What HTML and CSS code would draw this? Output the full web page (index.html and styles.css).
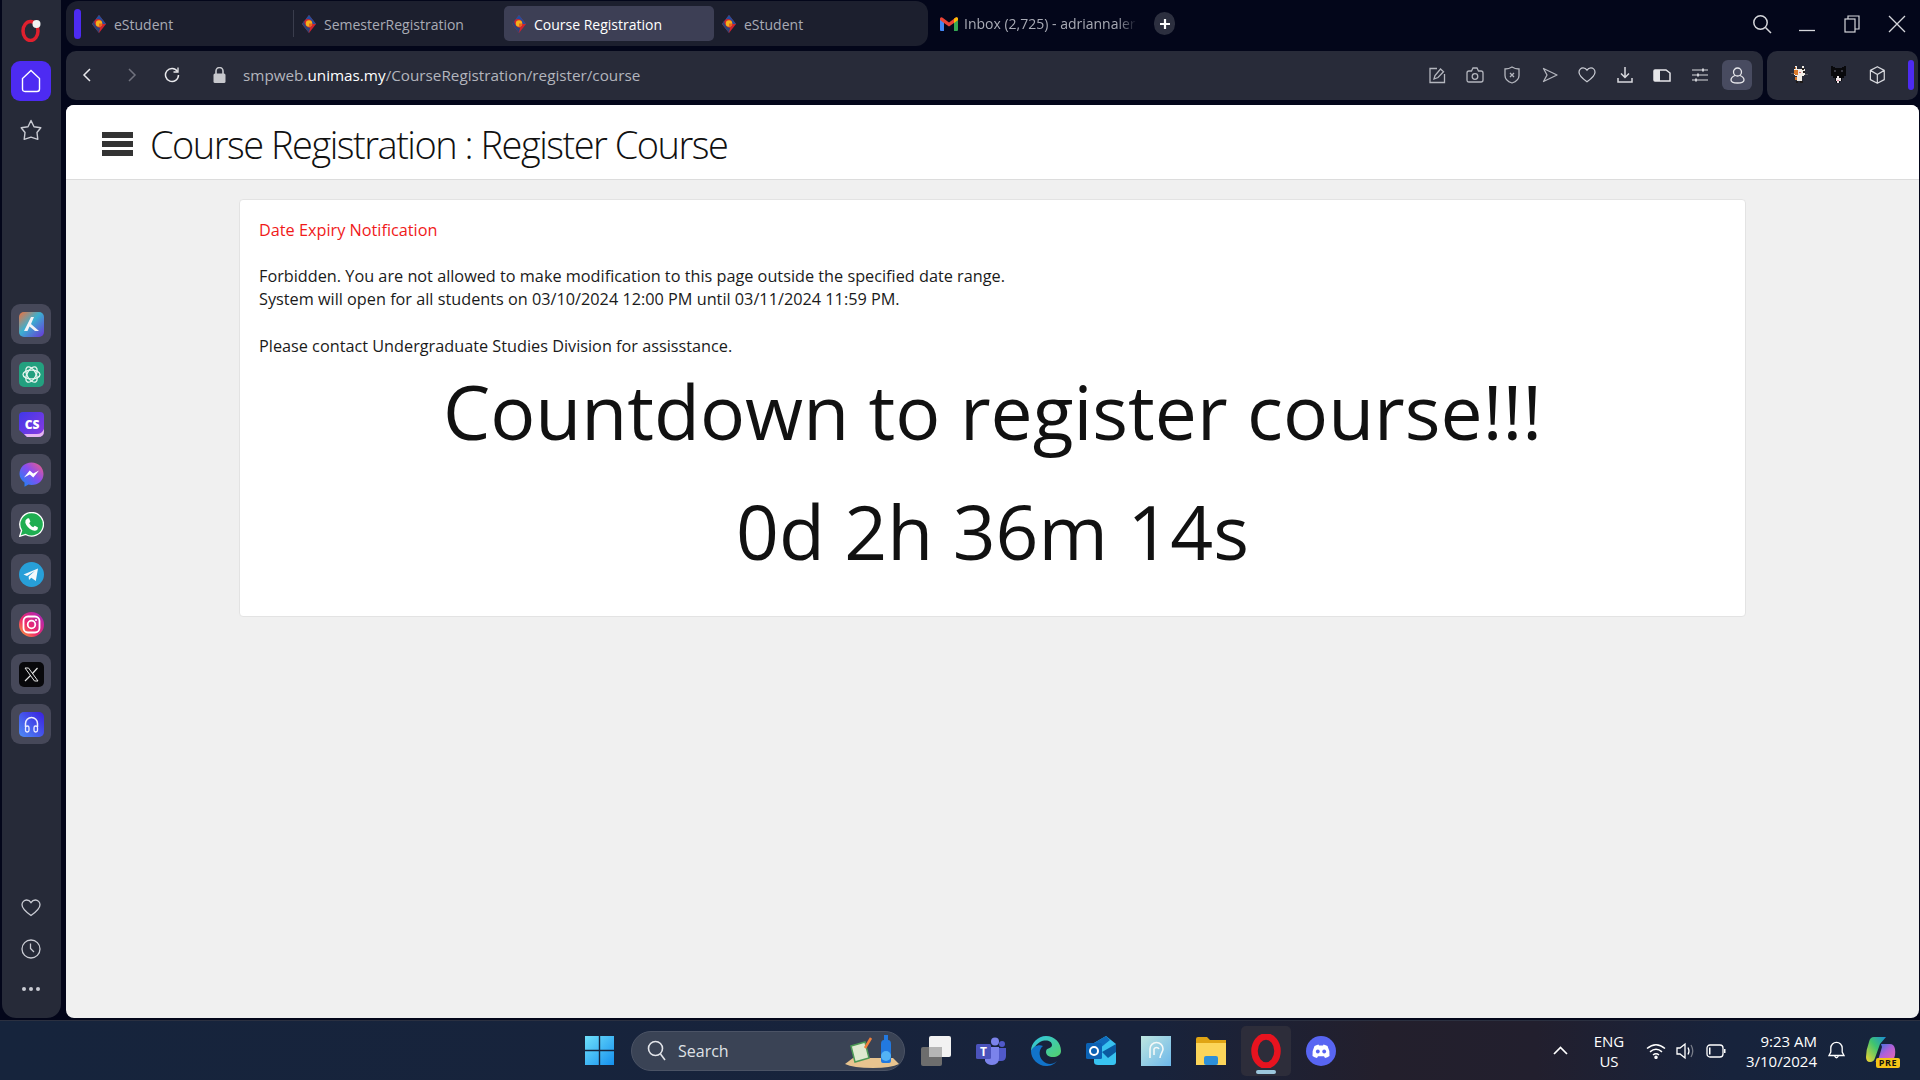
FILE: index.html
```html
<!DOCTYPE html>
<html>
<head>
    <title>Course Registration</title>
    <link rel="stylesheet" href="styles.css">
</head>
<body>
    <svg class="defs" width="0" height="0">
        <defs>
            <symbol id="fav" viewBox="0 0 14 18">
                <path d="M7 0 L14 9 L7 18 L0 9 Z" fill="#cc2430"/>
                <path d="M7 0 L14 9 H10.500 Q10 4 6 4 Q3 4 2 6 L0 9 Z" fill="#1f4f9e"/>
                <path d="M0 9 L2 6 Q3 12 8 13 L7 18 Z" fill="#2a4478"/>
                <circle cx="7" cy="8.500" r="3.200" fill="#f2b21b"/>
                <path d="M7 11.700 A3.200 3.200 0 0 0 10.200 8.500 H7 Z" fill="#e8651e"/>
            </symbol>
        </defs>
    </svg>

    <div class="shell">
        <!-- Sidebar -->
        <div class="sidebar">
            <div class="opera-logo">
                <svg width="24" height="24" viewBox="0 0 24 24"><ellipse cx="11.500" cy="13" rx="7.500" ry="9.500" fill="none" stroke="#e0202e" stroke-width="3.500"/><circle cx="17.500" cy="6" r="4" fill="#f2f2f2"/></svg>
            </div>
            <div class="home-tile">
                <svg width="20" height="24" viewBox="0 0 20 24" fill="none" stroke="#fff" stroke-width="1.400"><path d="M10 1.500 L18.500 9.500 V20 Q18.500 22.500 16 22.500 H4 Q1.500 22.500 1.500 20 V9.500 Z"/></svg>
            </div>
            <div class="side-star">
                <svg width="22" height="22" viewBox="0 0 22 22" fill="none" stroke="#c9cbd3" stroke-width="1.400" stroke-linejoin="round"><path d="M11 1.500 L14 7.800 L20.800 8.700 L17 13.500 L17.800 20.400 L11 18.200 L4.200 20.400 L5 13.500 L1.200 8.700 L8 7.800 Z"/></svg>
            </div>

            <div class="side-apps">
                <div class="app-tile"><svg width="25" height="25" viewBox="0 0 25 25"><defs><linearGradient id="ar" x1="0" y1="0" x2="1" y2="1"><stop offset="0" stop-color="#f0713c"/><stop offset=".45" stop-color="#3bb0d0"/><stop offset="1" stop-color="#6a35d8"/></linearGradient></defs><rect width="25" height="25" rx="5" fill="url(#ar)"/><path d="M5 19 L12 5 L15 5 L12 12 L20 19 L16 19 L10.500 14.500 L8.500 19 Z" fill="#f3f3f6"/></svg></div>
                <div class="app-tile"><svg width="25" height="25" viewBox="0 0 25 25"><rect width="25" height="25" rx="5" fill="#23a07f"/><g fill="none" stroke="#e6f5ef" stroke-width="1.300"><ellipse cx="12.500" cy="12.500" rx="8.500" ry="4.400"/><ellipse cx="12.500" cy="12.500" rx="8.500" ry="4.400" transform="rotate(60 12.500 12.500)"/><ellipse cx="12.500" cy="12.500" rx="8.500" ry="4.400" transform="rotate(120 12.500 12.500)"/></g></svg></div>
                <div class="app-tile"><svg width="25" height="25" viewBox="0 0 25 25"><defs><linearGradient id="csg" x1="0" y1="0" x2="1" y2="1"><stop offset="0" stop-color="#3f38e8"/><stop offset="1" stop-color="#8a3ae0"/></linearGradient></defs><path d="M4 0 H21 Q25 0 25 4 V19 Q25 25 19 25 H8 L0 18 V4 Q0 0 4 0 Z" fill="url(#csg)"/><path d="M25 17 V19 Q25 25 19 25 H8 L5 22 H18 Q23 22 25 17 Z" fill="#e6b6f0"/><text x="13" y="17" text-anchor="middle" class="cs-text">CS</text></svg></div>
                <div class="app-tile"><svg width="25" height="25" viewBox="0 0 25 25"><defs><linearGradient id="ms" x1="0" y1="1" x2="1" y2="0"><stop offset="0" stop-color="#0a8cf5"/><stop offset=".55" stop-color="#8a4cf0"/><stop offset="1" stop-color="#f5607a"/></linearGradient></defs><path d="M12.500 0.500 C19.500 0.500 24.500 5.500 24.500 12 C24.500 18.500 19.500 23 12.500 23 Q10.800 23 9.500 22.600 L5.500 24.700 V20.500 C2.500 18.300 0.500 15.500 0.500 12 C0.500 5.500 5.500 0.500 12.500 0.500 Z" fill="url(#ms)"/><path d="M5 15.500 L10.700 8.500 L14.200 11.500 L20 8.500 L14.300 15.500 L10.800 12.500 Z" fill="#fff"/></svg></div>
                <div class="app-tile"><svg width="25" height="25" viewBox="0 0 25 25"><path d="M12.700 0.500 A11.800 11.800 0 1 1 6.700 22.500 L0.700 24.300 L2.600 18.500 A11.800 11.800 0 0 1 12.700 0.500 Z" fill="#1fae51" stroke="#fff" stroke-width="1.300"/><path d="M8.300 6.500 L10 6.300 L11.400 9.600 L10.200 11.200 Q11.500 14 14.200 15.200 L15.800 13.700 L19 15.400 L18.500 17.500 Q16.500 19.500 13.500 18.300 Q8 16 6.300 10.800 Q5.800 8 8.300 6.500 Z" fill="#fff"/></svg></div>
                <div class="app-tile"><svg width="25" height="25" viewBox="0 0 25 25"><circle cx="12.500" cy="12.500" r="12.500" fill="#279fd8"/><path d="M4.500 12.500 L19 6.500 L16.800 19 L12.300 15.800 L10 18 L9.600 14.500 L16 8.800 L8 13.900 Z" fill="#f4f8fb"/></svg></div>
                <div class="app-tile"><svg width="25" height="25" viewBox="0 0 25 25"><defs><linearGradient id="ig" x1="0" y1="1" x2="1" y2="0"><stop offset="0" stop-color="#fcb033"/><stop offset=".4" stop-color="#ee2a6b"/><stop offset="1" stop-color="#a326c4"/></linearGradient></defs><circle cx="12.500" cy="12.500" r="12.500" fill="url(#ig)"/><rect x="4.500" y="4.500" width="16" height="16" rx="4.500" fill="none" stroke="#fff" stroke-width="1.800"/><circle cx="12.500" cy="12.500" r="3.800" fill="none" stroke="#fff" stroke-width="1.800"/><circle cx="17" cy="8" r="1.100" fill="#fff"/></svg></div>
                <div class="app-tile"><svg width="25" height="25" viewBox="0 0 25 25"><rect width="25" height="25" rx="5" fill="#08080b"/><path d="M6 6 H9.500 L19 19 H15.500 Z" fill="none" stroke="#e6e6e6" stroke-width="1"/><path d="M18.500 6 L13.500 11.500 M11.300 13.800 L6 19" stroke="#e6e6e6" stroke-width="1.200"/></svg></div>
                <div class="app-tile"><svg width="25" height="25" viewBox="0 0 25 25"><defs><linearGradient id="hp" x1="0" y1="1" x2="1" y2="0"><stop offset="0" stop-color="#4f8cf5"/><stop offset="1" stop-color="#3a1fe0"/></linearGradient></defs><rect width="25" height="25" rx="5" fill="url(#hp)"/><path d="M6.500 15 V11.500 A6 6 0 0 1 18.500 11.500 V15" fill="none" stroke="#eef" stroke-width="1.500"/><rect x="6.500" y="14" width="3.500" height="6" rx="1.700" fill="none" stroke="#eef" stroke-width="1.300"/><rect x="15" y="14" width="3.500" height="6" rx="1.700" fill="none" stroke="#eef" stroke-width="1.300"/></svg></div>
            </div>

            <div class="side-bottom">
                <svg width="20" height="18" viewBox="0 0 20 18" fill="none" stroke="#c9cbd3" stroke-width="1.300"><path d="M10 16.500 C5 13 1 9.800 1 5.800 C1 3 3.200 1 5.600 1 C7.500 1 9 2 10 3.600 C11 2 12.500 1 14.400 1 C16.800 1 19 3 19 5.800 C19 9.800 15 13 10 16.500 Z"/></svg>
                <svg width="20" height="20" viewBox="0 0 20 20" fill="none" stroke="#c9cbd3" stroke-width="1.300"><circle cx="10" cy="10" r="9"/><path d="M9.500 4.500 V9.500 L13 13"/></svg>
                <div class="dots"><span></span><span></span><span></span></div>
            </div>
        </div>

        <div class="main">
            <!-- Tabs -->
            <div class="tabs-row">
                <div class="tabs-panel">
                    <div class="tab-accent"></div>
                    <div class="tab"><svg class="favicon"><use href="#fav"/></svg>eStudent</div>
                    <div class="tab tab-sep"><svg class="favicon"><use href="#fav"/></svg>SemesterRegistration</div>
                    <div class="tab active"><svg class="favicon"><use href="#fav"/></svg>Course Registration</div>
                    <div class="tab"><svg class="favicon"><use href="#fav"/></svg>eStudent</div>
                </div>
                <div class="tab-mail">
                    <svg width="18" height="14" viewBox="0 0 18 14"><path d="M0 2 L4 5 V14 H1 Q0 14 0 13 Z" fill="#4285f4"/><path d="M18 2 L14 5 V14 H17 Q18 14 18 13 Z" fill="#34a853"/><path d="M0 1.500 Q1 -0.500 3 1 L9 5.500 L15 1 Q17 -0.500 18 1.500 V3 L14 6 L9 9.500 L4 6 L0 3 Z" fill="#ea4335"/><path d="M14 1.800 L15 1 Q17 -0.500 18 1.500 V3 L14 6 Z" fill="#fbbc04"/></svg>
                    <span class="mail-title">Inbox (2,725) - adriannaler</span>
                </div>
                <div class="new-tab">
                    <svg width="10" height="10" viewBox="0 0 10 10"><path d="M5 0 V10 M0 5 H10" stroke="#fff" stroke-width="2.200"/></svg>
                </div>
                <div class="win-btns">
                    <svg class="win-search" width="20" height="20" viewBox="0 0 20 20" fill="none" stroke="#d5d6db" stroke-width="1.500"><circle cx="8.500" cy="8.500" r="6.700"/><path d="M13.500 13.500 L19 19"/></svg>
                    <svg class="win-min" width="16" height="16" viewBox="0 0 16 16"><path d="M0 14.500 H16" stroke="#d5d6db" stroke-width="1.300"/></svg>
                    <svg width="16" height="18" viewBox="0 0 16 18" fill="none" stroke="#d5d6db" stroke-width="1.200"><rect x="1" y="4" width="10" height="13"/><path d="M4 4 V1 H15 V14 H11"/></svg>
                    <svg width="18" height="18" viewBox="0 0 18 18"><path d="M1 1 L17 17 M17 1 L1 17" stroke="#d5d6db" stroke-width="1.300"/></svg>
                </div>
            </div>

            <!-- Address bar -->
            <div class="address-row">
                <div class="address-bar">
                    <svg class="nav-back" width="10" height="14" viewBox="0 0 10 14"><path d="M8 1 L2 7 L8 13" fill="none" stroke="#e8e8ec" stroke-width="1.500"/></svg>
                    <svg class="nav-fwd" width="10" height="14" viewBox="0 0 10 14"><path d="M2 1 L8 7 L2 13" fill="none" stroke="#70727e" stroke-width="1.500"/></svg>
                    <svg class="nav-reload" width="16" height="16" viewBox="0 0 16 16" fill="none" stroke="#e8e8ec" stroke-width="1.500"><path d="M13.500 4.500 A6.500 6.500 0 1 0 14.500 8"/><path d="M14 0.500 V5 H9.500" stroke-width="1.300"/></svg>
                    <svg class="nav-lock" width="13" height="16" viewBox="0 0 13 16"><rect x="0.500" y="6.500" width="12" height="9.500" rx="1.500" fill="#c7c8cd"/><path d="M3 7 V4 A3.500 3.500 0 0 1 10 4 V7" fill="none" stroke="#c7c8cd" stroke-width="1.600"/></svg>
                    <div class="url">smpweb.<b>unimas.my</b>/CourseRegistration/register/course</div>
                    <div class="addr-icons">
                        <div class="addr-icon"><svg width="17" height="17" viewBox="0 0 17 17" fill="none" stroke="#b4b6be" stroke-width="1.300"><path d="M15.500 7 V15.500 H1 V1.500 H8"/><path d="M5 12 L6 8.500 L11.500 2 L14.500 4.800 L9 10.500 Z"/></svg></div>
                        <div class="addr-icon"><svg width="18" height="16" viewBox="0 0 18 16" fill="none" stroke="#b4b6be" stroke-width="1.300"><path d="M3 4 H5.500 L7 1 H11 L12.500 4 H15 Q17 4 17 6 V13 Q17 15 15 15 H3 Q1 15 1 13 V6 Q1 4 3 4 Z"/><circle cx="9" cy="9.500" r="2.800"/></svg></div>
                        <div class="addr-icon"><svg width="16" height="18" viewBox="0 0 16 18" fill="none" stroke="#b4b6be" stroke-width="1.300"><path d="M8 1 Q11 3 15 3 V9.500 C15 13.500 11 16 8 17 C5 16 1 13.500 1 9.500 V3 Q5 3 8 1 Z"/><path d="M6 7 L10 11 M10 7 L6 11"/></svg></div>
                        <div class="addr-icon"><svg width="16" height="16" viewBox="0 0 16 16" fill="none" stroke="#b4b6be" stroke-width="1.300" stroke-linejoin="round"><path d="M1.500 1.500 L15 8 L1.500 14.500 L5 8 Z"/></svg></div>
                        <div class="addr-icon"><svg width="18" height="16" viewBox="0 0 20 18" fill="none" stroke="#c9cbd3" stroke-width="1.400"><path d="M10 16.500 C5 13 1 9.800 1 5.800 C1 3 3.200 1 5.600 1 C7.500 1 9 2 10 3.600 C11 2 12.500 1 14.400 1 C16.800 1 19 3 19 5.800 C19 9.800 15 13 10 16.500 Z"/></svg></div>
                        <div class="addr-icon"><svg width="16" height="16" viewBox="0 0 16 16" fill="none" stroke="#d8d9de" stroke-width="1.500"><path d="M8 0 V10 M4 6.500 L8 10.500 L12 6.500 M1 11 V15 H15 V11"/></svg></div>
                        <div class="addr-icon"><svg width="18" height="13" viewBox="0 0 18 13"><path d="M2 1 H13 L17 4 V12 H2 Q1 12 1 11 V2 Q1 1 2 1 Z" fill="none" stroke="#e6e6ea" stroke-width="1.500"/><rect x="1" y="1" width="6" height="11" fill="#e6e6ea"/></svg></div>
                        <div class="addr-icon"><svg width="16" height="14" viewBox="0 0 16 14" stroke="#d8d9de" stroke-width="1.200"><path d="M0 2 H16 M0 7 H16 M0 12 H16"/><path d="M11 0.500 V3.500 M6 5.500 V8.500 M4 10.500 V13.500" stroke-width="1.800"/></svg></div>
                        <div class="addr-icon user-tile"><svg width="15" height="17" viewBox="0 0 15 17" fill="none" stroke="#e6e6ea" stroke-width="1.300"><circle cx="7.500" cy="5" r="4"/><path d="M5 8.500 C2.500 9.500 1 11 1 13 C1 15.500 3 16 7.500 16 C12 16 14 15.500 14 13 C14 11 12.500 9.500 10 8.500"/></svg></div>
                    </div>
                </div>
                <div class="ext-bar">
                    <svg class="pixel" width="18" height="20" viewBox="0 0 18 20"><path d="M4 0 H6 V3 H12 V0 H14 V4 H15 V10 H14 V11 H12 V16 H6 V11 H4 V10 H3 V4 H4 Z" fill="#f1ece6"/><path d="M3 4 H7 V3 H5 V1 H4 V4 Z M3 5 H8 V10 H4 V9 H3 Z" fill="#d9792b"/><path d="M12 2 H14 V5 H12 Z M13 6 H15 V8 H13 Z" fill="#26201c"/><path d="M0 8 H3 V9 H0 Z M15 9 H18 V10 H15 Z" fill="#55565f"/><path d="M4 12 H6 V15 H4 Z" fill="#d9792b"/><path d="M5 16 H8 V19 H5 Z M10 16 H13 V19 H10 Z" fill="#1e1a18"/><path d="M9 7 H11 V8 H9 Z" fill="#d96a7a"/></svg>
                    <svg class="pixel" width="18" height="20" viewBox="0 0 18 20"><path d="M1 0 H3 V1 H5 V2 H13 V1 H15 V0 H17 V11 H15 V13 H13 V17 H11 V19 H7 V17 H5 V13 H3 V11 H1 Z" fill="#09090c"/><path d="M8 11 H10 V13 H12 V17 H10 V19 H8 V17 H6 V13 H8 Z" fill="#ece6e8"/><path d="M8 15 H10 V17 H8 Z" fill="#d98aa0"/><path d="M4 5 H6 V7 H4 Z M12 5 H14 V7 H12 Z" fill="#3a3a44"/></svg>
                    <svg width="18" height="20" viewBox="0 0 18 20" fill="none" stroke="#d8d9de" stroke-width="1.300" stroke-linejoin="round"><path d="M9 1 L16.500 5 V15 L9 19 L1.500 15 V5 Z M1.500 5 L9 9.500 L16.500 5 M9 9.500 V19"/></svg>
                    <div class="ext-accent"></div>
                </div>
            </div>

            <!-- Page -->
            <div class="page">
                <div class="page-header">
                    <div class="burger"><span></span><span></span><span></span></div>
                    <h1 class="page-title">Course Registration : Register Course</h1>
                </div>
                <div class="card">
                    <p class="notice">Date Expiry Notification</p>
                    <p class="message">Forbidden. You are not allowed to make modification to this page outside the specified date range.<br>System will open for all students on 03/10/2024 12:00 PM until 03/11/2024 11:59 PM.</p>
                    <p class="message">Please contact Undergraduate Studies Division for assisstance.</p>
                    <div class="countdown">Countdown to register course!!!</div>
                    <div class="countdown">0d 2h 36m 14s</div>
                </div>
            </div>
        </div>
    </div>

    <!-- Windows taskbar -->
    <div class="taskbar">
        <svg class="win-logo" width="29" height="29" viewBox="0 0 29 29"><defs><linearGradient id="wl" x1="0" y1="0" x2="1" y2="1"><stop offset="0" stop-color="#6fe0fb"/><stop offset="1" stop-color="#1590ee"/></linearGradient></defs><path d="M0 0 H13.800 V13.800 H0 Z M15.200 0 H29 V13.800 H15.200 Z M0 15.200 H13.800 V29 H0 Z M15.200 15.200 H29 V29 H15.200 Z" fill="url(#wl)"/></svg>
        <div class="search-pill">
            <svg width="19" height="21" viewBox="0 0 19 21" fill="none" stroke="#e3e5ea" stroke-width="1.600"><circle cx="8.500" cy="8.500" r="7"/><path d="M13.500 14 L18 20"/></svg>
            <span class="search-text">Search</span>
            <svg class="search-art" width="56" height="34" viewBox="0 0 56 34"><path d="M2 30 L10 24 H50 L56 30 Q48 34 30 34 Q10 34 2 30 Z" fill="#e8c48f"/><path d="M8 12 L22 8 L26 24 L12 28 Z" fill="#dfe9cf" stroke="#4d9a55" stroke-width="1.500"/><path d="M22 14 L28 4" stroke="#f0803c" stroke-width="2.500"/><path d="M38 10 Q38 6 41 6 V1 H45 V6 Q48 6 48 10 V27 Q48 29 46 29 H40 Q38 29 38 27 Z" fill="#2279e0"/><circle cx="43" cy="22" r="5" fill="#53b3f5"/></svg>
        </div>
        <div class="task-icons">
            <div class="task-icon"><svg width="30" height="30" viewBox="0 0 30 30"><rect x="0" y="11" width="21" height="19" rx="2" fill="#6d6d6d"/><rect x="8" y="0" width="22" height="21" rx="2" fill="#f2f2f2"/><rect x="8" y="11" width="13" height="10" fill="#b5b5b5"/></svg></div>
            <div class="task-icon"><svg width="30" height="28" viewBox="0 0 30 28"><circle cx="19" cy="4.500" r="4" fill="#7b83eb"/><circle cx="26" cy="7" r="3" fill="#5059c9"/><path d="M20 11 H30 V19 Q30 24 25 24 H22 Z" fill="#5059c9"/><path d="M9 10 H23 V21 Q23 28 16 28 Q11 28 9 24 Z" fill="#7b83eb"/><rect x="0" y="7" width="15" height="15" rx="1.500" fill="#4b53bc"/><text x="7.500" y="19" text-anchor="middle" class="teams-t">T</text></svg></div>
            <div class="task-icon"><svg width="30" height="30" viewBox="0 0 30 30"><defs><linearGradient id="eg" x1="0" y1="0" x2="1" y2="1"><stop offset="0" stop-color="#2fc6e8"/><stop offset="1" stop-color="#53d06a"/></linearGradient></defs><path d="M15 0 C24 0 30 7 30 15 C30 19 26 21 22 21 C18 21 15 19 15 16 C15 11 21 13 21 9 C21 5 15 3 9 6 C4 9 2 14 0 15 C0 7 7 0 15 0 Z" fill="url(#eg)"/><path d="M0 15 C2 10 8 8 12 10 C8 13 7 20 12 25 C16 29 22 29 26 25 C23 29 19 30 15 30 C7 30 0 23 0 15 Z" fill="#1173c9"/></svg></div>
            <div class="task-icon"><svg width="30" height="30" viewBox="0 0 30 30"><path d="M8 7 L20 0 L30 8 V26 Q30 29 27 29 H12 Q8 29 8 26 Z" fill="#38c3f0"/><path d="M8 7 L20 0 L24 4 L8 17 Z" fill="#0f6cbd"/><path d="M16 16 L30 8 V16 L22 22 Z" fill="#0a5aa0"/><rect x="0" y="7" width="16" height="16" rx="1.500" fill="#0b62b4"/><circle cx="8" cy="15" r="4" fill="none" stroke="#fff" stroke-width="2"/></svg></div>
            <div class="task-icon"><svg width="30" height="30" viewBox="0 0 30 30"><defs><linearGradient id="pl" x1="0" y1="0" x2="1" y2="1"><stop offset="0" stop-color="#bfe6e0"/><stop offset="1" stop-color="#6cb7ea"/></linearGradient></defs><rect width="30" height="30" fill="url(#pl)"/><path d="M9 22 V13 A6.500 6.500 0 0 1 22 13 C22 16 19 18 19 22 M13 19 V13 A2.800 2.800 0 0 1 18 13" fill="none" stroke="#f3f8f8" stroke-width="1.600"/></svg></div>
            <div class="task-icon"><svg width="30" height="28" viewBox="0 0 30 28"><path d="M0 2 Q0 0 2 0 H11 L14 3 H30 V28 H0 Z" fill="#e0a414"/><rect y="6" width="30" height="22" fill="#fcd55a"/><rect x="8" y="19" width="14" height="9" rx="2" fill="#2d8fd8"/></svg></div>
            <div class="task-icon opera-active"><svg width="30" height="34" viewBox="0 0 30 34"><ellipse cx="15" cy="17" rx="11.500" ry="14.500" fill="none" stroke="#e8131f" stroke-width="6.500"/></svg><span class="run-dot"></span></div>
            <div class="task-icon"><svg width="30" height="30" viewBox="0 0 30 30"><circle cx="15" cy="15" r="15" fill="#5865f2"/><path d="M8.500 10 Q11.500 8.500 12.500 8.500 L13 9.500 H17 L17.500 8.500 Q18.500 8.500 21.500 10 Q24 14.500 23.500 20 Q21.500 21.500 19 22 L18 20.300 H12 L11 22 Q8.500 21.500 6.500 20 Q6 14.500 8.500 10 Z" fill="#fff"/><ellipse cx="11.800" cy="15.500" rx="1.900" ry="2.100" fill="#5865f2"/><ellipse cx="18.200" cy="15.500" rx="1.900" ry="2.100" fill="#5865f2"/></svg></div>
        </div>
        <div class="tray">
            <svg class="tray-chevron" width="15" height="9" viewBox="0 0 15 9"><path d="M1 8 L7.500 1.500 L14 8" fill="none" stroke="#fff" stroke-width="1.700"/></svg>
            <div class="tray-lang">ENG<br>US</div>
            <svg class="tray-wifi" width="20" height="16" viewBox="0 0 20 16" fill="none" stroke="#fff" stroke-width="1.500"><path d="M1 5.500 Q10 -2 19 5.500 M4 8.800 Q10 3.800 16 8.800 M7 12 Q10 9.500 13 12"/><circle cx="10" cy="14.300" r="1" fill="#fff"/></svg>
            <svg class="tray-vol" width="20" height="18" viewBox="0 0 20 18" fill="none" stroke="#fff" stroke-width="1.300"><path d="M1 6 H4 L9 2 V16 L4 12 H1 Z"/><path d="M12 5.500 Q14 9 12 12.500"/><path d="M15 3 Q18.500 9 15 15" stroke="#777c88"/></svg>
            <svg class="tray-batt" width="20" height="14" viewBox="0 0 20 14" fill="none" stroke="#fff" stroke-width="1.300"><rect x="1" y="1" width="16" height="12" rx="3"/><rect x="3" y="3.500" width="1.500" height="7" fill="#fff" stroke="none"/><path d="M18 5 H19.500 V9 H18" fill="#fff" stroke="none"/></svg>
            <div class="tray-clock">9:23 AM<br>3/10/2024</div>
            <svg class="tray-bell" width="17" height="19" viewBox="0 0 17 19" fill="none" stroke="#fff" stroke-width="1.300"><path d="M1 14.500 L2.800 11 V7 A5.700 5.700 0 0 1 14.200 7 V11 L16 14.500 Z"/><path d="M6.500 14.500 Q8.500 19 10.500 14.500"/></svg>
            <div class="copilot">
                <svg width="30" height="28" viewBox="0 0 30 28"><defs><linearGradient id="cp1" x1="0" y1="1" x2="1" y2="0"><stop offset="0" stop-color="#f5d430"/><stop offset=".55" stop-color="#3fc46f"/><stop offset="1" stop-color="#1b8ed8"/></linearGradient><linearGradient id="cp2" x1="0" y1="0" x2="1" y2="1"><stop offset="0" stop-color="#1c7be0"/><stop offset=".5" stop-color="#b060d8"/><stop offset="1" stop-color="#f06aa8"/></linearGradient></defs><path d="M8 1 H20 L14 8 L9 22 Q8 26 4 26 Q0 26 0 21 Q0 14 3 6 Q4 1 8 1 Z" fill="url(#cp1)"/><path d="M15 8 H24 Q28 8 29 13 Q30 20 27 24 Q26 26 22 26 H9 Q12 25 13 21 L16 11 Z" fill="url(#cp2)"/></svg>
                <span class="pre-badge">PRE</span>
            </div>
        </div>
    </div>
</body>
</html>
```

FILE: styles.css
```css
body {
    margin: 0;
    width: 1920px;
    height: 1080px;
    overflow: hidden;
    background-color: #03061a;
    font-family: "Open Sans", sans-serif;
    color: #111;
}
.defs {
    position: absolute;
}
.shell {
    display: flex;
    height: 1020px;
}

/* Sidebar */
.sidebar {
    box-sizing: border-box;
    width: 59px;
    height: 1018px;
    margin-left: 2px;
    padding-right: 1px;
    background-color: #262a38;
    border-radius: 0 0 14px 14px;
    display: flex;
    flex-direction: column;
    align-items: center;
}
.opera-logo {
    height: 42px;
    margin-top: 18px;
}
.home-tile {
    width: 40px;
    height: 40px;
    margin-top: 1px;
    background-color: #4d2bf2;
    border-radius: 9px;
    display: flex;
    align-items: center;
    justify-content: center;
}
.side-star {
    margin-top: 18px;
    height: 22px;
}
.side-apps {
    margin-top: 163px;
    display: flex;
    flex-direction: column;
    gap: 10px;
}
.app-tile {
    width: 40px;
    height: 40px;
    background-color: #464859;
    border-radius: 9px;
    display: flex;
    align-items: center;
    justify-content: center;
}
.cs-text {
    font-family: "Open Sans", sans-serif;
    font-weight: 800;
    font-size: 12px;
    fill: #fff;
}
.side-bottom {
    margin-top: auto;
    margin-bottom: 27px;
    display: flex;
    flex-direction: column;
    align-items: center;
    gap: 22px;
}
.dots {
    display: flex;
    gap: 3px;
    margin-top: 6px;
}
.dots span {
    width: 4px;
    height: 4px;
    border-radius: 50%;
    background-color: #c9cbd3;
}

/* Browser chrome */
.main {
    width: 1853px;
    margin-left: 5px;
    display: flex;
    flex-direction: column;
}
.tabs-row {
    height: 45px;
    margin-top: 1px;
    display: flex;
    align-items: center;
}
.tabs-panel {
    box-sizing: border-box;
    width: 862px;
    height: 45px;
    padding-left: 8px;
    background-color: #1c1f2e;
    border-radius: 12px;
    display: flex;
    align-items: center;
}
.tab-accent {
    width: 7px;
    height: 30px;
    margin-right: 3px;
    background-color: #4d2bf2;
    border-radius: 4px;
}
.tab {
    box-sizing: border-box;
    width: 210px;
    height: 35px;
    padding-left: 8px;
    padding-top: 1px;
    font-size: 14px;
    color: #a9abb5;
    border-radius: 5px;
    display: flex;
    align-items: center;
    position: relative;
}
.tab-sep::before {
    content: "";
    position: absolute;
    left: -1px;
    top: 4px;
    height: 27px;
    width: 1px;
    background-color: #3a3d4d;
}
.tab.active {
    background-color: #3d3f55;
    color: #fff;
}
.favicon {
    width: 14px;
    height: 18px;
    margin-right: 8px;
}
.tab-mail {
    width: 197px;
    margin-left: 12px;
    display: flex;
    align-items: center;
    gap: 6px;
    font-size: 14px;
    color: #a9abb5;
    overflow: hidden;
    white-space: nowrap;
    -webkit-mask-image: linear-gradient(to right, #000 90%, transparent);
}
.mail-title {
    overflow: hidden;
}
.new-tab {
    width: 21px;
    height: 23px;
    margin-left: 17px;
    background-color: #2c2f3f;
    border-radius: 11px;
    display: flex;
    align-items: center;
    justify-content: center;
}
.win-btns {
    margin-left: auto;
    padding-right: 13px;
    display: flex;
    align-items: center;
    gap: 28px;
}
.win-search {
    margin-right: 1px;
}
.win-min {
    margin: 0 1px 0 -2px;
}
.address-row {
    height: 49px;
    margin-top: 5px;
    display: flex;
    gap: 4px;
}
.address-bar {
    box-sizing: border-box;
    width: 1697px;
    padding-left: 16px;
    padding-bottom: 1px;
    background-color: #282b39;
    border-radius: 10px;
    display: flex;
    align-items: center;
}
.nav-fwd {
    margin-left: 35px;
}
.nav-reload {
    margin-left: 27px;
}
.nav-lock {
    margin-left: 33px;
}
.url {
    margin-left: 17px;
    font-size: 15.25px;
    color: #b3b5bd;
}
.url b {
    font-weight: 400;
    color: #fff;
}
.addr-icons {
    margin-left: auto;
    padding-right: 11px;
    display: flex;
    align-items: center;
    gap: 7.5px;
}
.addr-icon {
    width: 30px;
    height: 30px;
    display: flex;
    align-items: center;
    justify-content: center;
}
.user-tile {
    background-color: #484b60;
    border-radius: 6px;
}
.ext-bar {
    box-sizing: border-box;
    width: 151px;
    padding-left: 24px;
    padding-right: 4px;
    padding-bottom: 1px;
    background-color: #282b39;
    border-radius: 10px;
    display: flex;
    align-items: center;
    gap: 22.5px;
}
.pixel {
    shape-rendering: crispEdges;
}
.ext-accent {
    width: 6px;
    height: 30px;
    margin-left: auto;
    background-color: #4d2bf2;
    border-radius: 3px;
}

/* Page */
.page {
    height: 913px;
    margin-top: 5px;
    background-color: #f0f0f0;
    border-radius: 8px;
    overflow: hidden;
}
.page-header {
    box-sizing: border-box;
    height: 75px;
    padding-left: 36px;
    padding-top: 4px;
    background-color: #fff;
    border-bottom: 1px solid #dcdcdc;
    display: flex;
    align-items: center;
}
.burger {
    width: 31px;
    display: flex;
    flex-direction: column;
    gap: 3px;
}
.burger span {
    height: 6px;
    background-color: #333;
}
.page-title {
    margin: 0 0 0 17px;
    font-size: 38px;
    font-weight: 300;
    color: #111;
    letter-spacing: -1.5px;
}
.card {
    box-sizing: border-box;
    width: 1507px;
    height: 418px;
    margin: 19px 0 0 173px;
    padding: 19px 19px;
    background-color: #fff;
    border: 1px solid #e3e3e3;
    border-radius: 4px;
    font-size: 16.25px;
    line-height: 23px;
}
.notice {
    margin: 0 0 23px;
    color: #f01a1a;
}
.message {
    margin: 0 0 24px;
    color: #1a1a1a;
}
.countdown {
    text-align: center;
    font-size: 75px;
    line-height: 120px;
    color: #111;
}
.message + .countdown {
    margin-top: -31px;
}

/* Taskbar */
.taskbar {
    box-sizing: border-box;
    height: 60px;
    padding-left: 585px;
    border-top: 1px solid #2b3040;
    background: linear-gradient(to right, #16243c 0%, #18233c 60%, #231f2c 72%, #221f2e 80%, #17233c 90%, #16243c 100%);
    display: flex;
    align-items: center;
}
.win-logo {
    flex: none;
}
.search-pill {
    box-sizing: border-box;
    width: 274px;
    height: 40px;
    margin-left: 17px;
    padding-left: 15px;
    background-color: #3a4355;
    border: 1px solid #4b5365;
    border-radius: 20px;
    display: flex;
    align-items: center;
    position: relative;
}
.search-text {
    margin-left: 12px;
    font-size: 16px;
    color: #dfe1e6;
}
.search-art {
    position: absolute;
    right: 5px;
    top: 2px;
}
.task-icons {
    margin-left: 6px;
    display: flex;
    align-items: center;
    gap: 5px;
}
.task-icon {
    width: 50px;
    height: 50px;
    display: flex;
    align-items: center;
    justify-content: center;
    position: relative;
}
.teams-t {
    font-family: "Open Sans", sans-serif;
    font-weight: 700;
    font-size: 12px;
    fill: #fff;
}
.opera-active {
    background-color: #2d2d3a;
    border-radius: 5px;
}
.run-dot {
    position: absolute;
    bottom: 2px;
    left: 15px;
    width: 20px;
    height: 4px;
    background-color: #9cc7dd;
    border-radius: 2px;
}
.tray {
    margin-left: 207px;
    display: flex;
    align-items: center;
    color: #fff;
    font-size: 15px;
    line-height: 20px;
}
.tray-lang {
    width: 50px;
    margin-left: 16px;
    text-align: center;
}
.tray-wifi {
    margin-left: 12px;
}
.tray-vol {
    margin-left: 10px;
}
.tray-batt {
    margin-left: 10px;
}
.tray-clock {
    width: 90px;
    margin-left: 1px;
    text-align: right;
}
.tray-bell {
    margin-left: 11px;
}
.copilot {
    margin-left: 21px;
    width: 32px;
    height: 30px;
    position: relative;
}
.pre-badge {
    position: absolute;
    right: -2px;
    bottom: -2px;
    padding: 0 3px;
    background-color: #f5c518;
    border-radius: 2px;
    font-size: 9px;
    font-weight: 700;
    line-height: 10px;
    letter-spacing: 0.5px;
    color: #111;
}
```
